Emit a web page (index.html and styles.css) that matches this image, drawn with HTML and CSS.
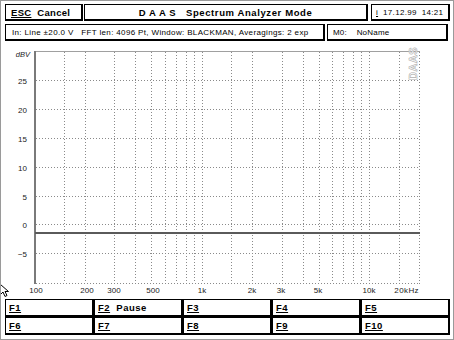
FILE: index.html
```html
<!DOCTYPE html>
<html lang="en">
<head>
  <meta charset="UTF-8" />
  <title>DAAS Spectrum Analyzer</title>
  <link rel="stylesheet" href="styles.css">
</head>
<body>
  <div class="screen">
    <div class="row">
      <div class="box esc"><span class="key">ESC</span>&nbsp; Cancel</div>
      <div class="box title">D A A S&nbsp;&nbsp; Spectrum Analyzer Mode</div>
      <div class="box date"><u>i</u>&nbsp; 17.12.99&nbsp; 14:21</div>
    </div>
    <div class="row">
      <div class="box params">In: Line ±20.0 V&nbsp;&nbsp; FFT len: 4096 Pt, Window: BLACKMAN, Averagings: 2 exp</div>
      <div class="box name">M0:&nbsp;&nbsp;&nbsp; NoName</div>
    </div>

    <svg class="chart" width="452" height="256" viewBox="1 41 452 256">
      <g class="grid">
        <line x1="64.5" y1="52" x2="64.5" y2="283" />
        <line x1="85.5" y1="52" x2="85.5" y2="283" />
        <line x1="114.5" y1="52" x2="114.5" y2="283" />
        <line x1="135.5" y1="52" x2="135.5" y2="283" />
        <line x1="151.5" y1="52" x2="151.5" y2="283" />
        <line x1="165.5" y1="52" x2="165.5" y2="283" />
        <line x1="176.5" y1="52" x2="176.5" y2="283" />
        <line x1="186.5" y1="52" x2="186.5" y2="283" />
        <line x1="194.5" y1="52" x2="194.5" y2="283" />
        <line x1="202.5" y1="52" x2="202.5" y2="283" />
        <line x1="231.5" y1="52" x2="231.5" y2="283" />
        <line x1="252.5" y1="52" x2="252.5" y2="283" />
        <line x1="282.5" y1="52" x2="282.5" y2="283" />
        <line x1="303.5" y1="52" x2="303.5" y2="283" />
        <line x1="319.5" y1="52" x2="319.5" y2="283" />
        <line x1="332.5" y1="52" x2="332.5" y2="283" />
        <line x1="343.5" y1="52" x2="343.5" y2="283" />
        <line x1="353.5" y1="52" x2="353.5" y2="283" />
        <line x1="361.5" y1="52" x2="361.5" y2="283" />
        <line x1="369.5" y1="52" x2="369.5" y2="283" />
        <line x1="399.5" y1="52" x2="399.5" y2="283" />
        <line x1="36" y1="80.5" x2="420" y2="80.5" />
        <line x1="36" y1="109.5" x2="420" y2="109.5" />
        <line x1="36" y1="138.5" x2="420" y2="138.5" />
        <line x1="36" y1="167.5" x2="420" y2="167.5" />
        <line x1="36" y1="196.5" x2="420" y2="196.5" />
        <line x1="36" y1="224.5" x2="420" y2="224.5" />
        <line x1="36" y1="253.5" x2="420" y2="253.5" />
        <line x1="419.5" y1="52" x2="419.5" y2="284" />
        <line x1="36" y1="283.5" x2="420" y2="283.5" />
      </g>
      <line class="frame" x1="35" y1="51.5" x2="420" y2="51.5" />
      <line class="axis" x1="35" y1="51" x2="35" y2="284" />
      <text class="watermark" transform="translate(417 80) rotate(-90)">DAAS</text>
      <line class="trace" x1="35" y1="233" x2="420" y2="233" />

      <g class="ylabels">
        <text class="unit" x="30" y="57">dBV</text>
        <text x="27" y="83.5">25</text>
        <text x="27" y="112.5">20</text>
        <text x="27" y="141.5">15</text>
        <text x="27" y="170.5">10</text>
        <text x="27" y="199.5">5</text>
        <text x="27" y="227.5">0</text>
        <text x="27" y="256.5">−5</text>
      </g>
      <g class="xlabels">
        <text x="36" y="293">100</text>
        <text x="87" y="293">200</text>
        <text x="114" y="293">300</text>
        <text x="153" y="293">500</text>
        <text x="202" y="293">1k</text>
        <text x="252" y="293">2k</text>
        <text x="281" y="293">3k</text>
        <text x="318" y="293">5k</text>
        <text x="369" y="293">10k</text>
        <text class="end" x="419" y="293">20kHz</text>
      </g>
    </svg>

    <div class="fkeys">
      <div class="box fkey"><span class="key">F1</span></div>
      <div class="box fkey"><span class="key">F2</span>&nbsp; Pause</div>
      <div class="box fkey"><span class="key">F3</span></div>
      <div class="box fkey"><span class="key">F4</span></div>
      <div class="box fkey"><span class="key">F5</span></div>
      <div class="box fkey"><span class="key">F6</span></div>
      <div class="box fkey"><span class="key">F7</span></div>
      <div class="box fkey"><span class="key">F8</span></div>
      <div class="box fkey"><span class="key">F9</span></div>
      <div class="box fkey"><span class="key">F10</span></div>
    </div>

    <svg class="cursor" width="10" height="14" viewBox="0 0 10 14">
      <path d="M0.5 0.5 L0.5 10.5 L3 8 L5 12.5 L7 11.5 L5 7.5 L8.5 7.5 Z" fill="#fff" stroke="#000" stroke-width="1" />
    </svg>
  </div>
</body>
</html>
```

FILE: styles.css
```css
body {
  margin: 0;
  padding: 0;
  background: #fff;
  color: #000;
  font-family: 'Liberation Sans', Arial, sans-serif;
}
.screen {
  position: relative;
  box-sizing: border-box;
  width: 454px;
  height: 340px;
  border: 1px solid #9a9a9a;
  background: #fff;
  overflow: hidden;
}
.row {
  display: flex;
  margin: 3px 0 0 4px;
}
.box {
  box-sizing: border-box;
  height: 17px;
  border-top: 1px solid #000;
  border-left: 1px solid #000;
  border-right: 2px solid #000;
  border-bottom: 2px solid #000;
  display: flex;
  align-items: center;
  white-space: nowrap;
  overflow: hidden;
}
.key {
  text-decoration: underline;
}
.esc {
  width: 78px;
  padding-left: 5px;
  font-weight: bold;
  font-size: 9.5px;
  letter-spacing: 0.3px;
}
.title {
  width: 284px;
  margin-left: 1px;
  justify-content: center;
  font-weight: bold;
  font-size: 9.5px;
  letter-spacing: 0.6px;
}
.date {
  width: 79px;
  margin-left: 3px;
  padding-left: 4px;
  font-size: 8px;
  letter-spacing: 0.3px;
}
.params {
  width: 320px;
  padding-left: 6px;
  font-size: 8px;
  letter-spacing: 0.35px;
}
.name {
  width: 121px;
  margin-left: 2px;
  padding-left: 5px;
  font-size: 8px;
  letter-spacing: 0.2px;
}
.chart {
  display: block;
}
.grid line {
  stroke: #8a8a8a;
  stroke-width: 1;
  stroke-dasharray: 1 2;
}
.frame {
  stroke: #a0a0a0;
  stroke-width: 1;
}
.axis {
  stroke: #7a7a7a;
  stroke-width: 2;
}
.trace {
  stroke: #5a5a5a;
  stroke-width: 2;
}
.watermark {
  font-family: 'Liberation Sans', Arial, sans-serif;
  font-weight: bold;
  font-size: 11px;
  fill: #fff;
  stroke: #b0b0b0;
  stroke-width: 0.6;
  letter-spacing: 0.5px;
}
.ylabels text {
  font-family: 'Liberation Sans', Arial, sans-serif;
  font-size: 8px;
  text-anchor: end;
  fill: #222;
}
.ylabels .unit {
  font-style: italic;
  font-size: 7.5px;
}
.xlabels text {
  font-family: 'Liberation Sans', Arial, sans-serif;
  font-size: 8px;
  text-anchor: middle;
  fill: #222;
}
.xlabels .end {
  text-anchor: end;
  letter-spacing: 0.4px;
}
.fkeys {
  display: grid;
  grid-template-columns: repeat(5, 89px);
  grid-auto-rows: 18px;
  margin: 2px 0 0 4px;
}
.fkey {
  height: 18px;
  padding-left: 3px;
  font-weight: bold;
  font-size: 9.5px;
  letter-spacing: 0.5px;
}
.cursor {
  position: absolute;
  left: -1px;
  top: 283px;
}
```
